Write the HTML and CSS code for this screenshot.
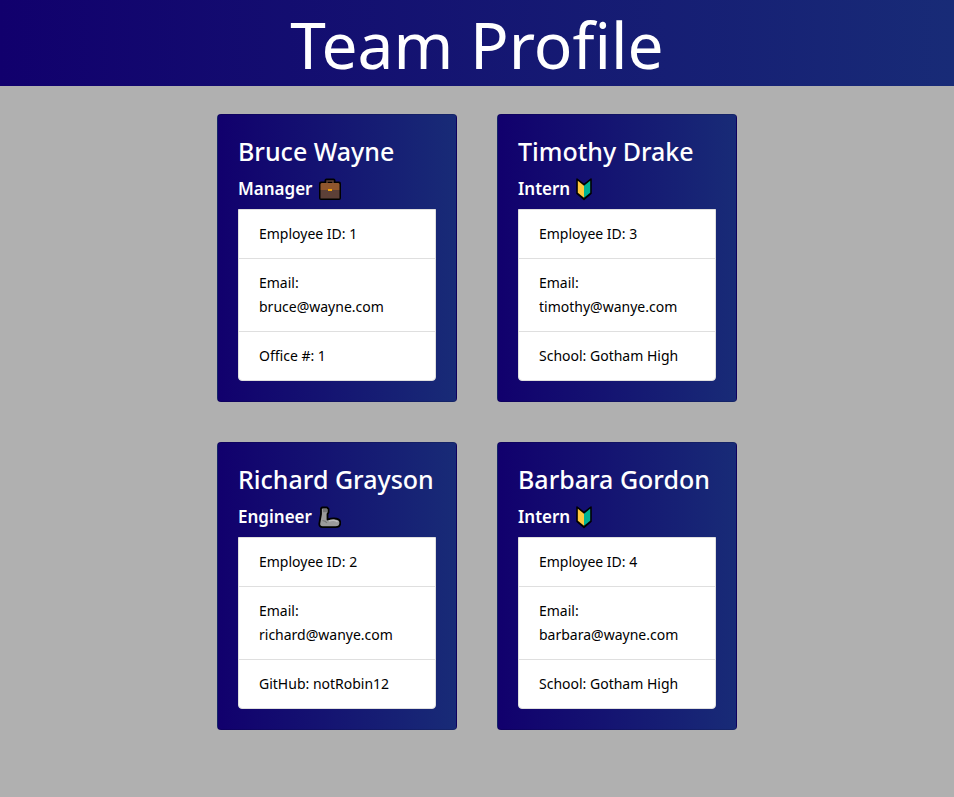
FILE: index.html
```html
<!DOCTYPE html>
<html lang="en">
<head>
  <meta charset="utf-8">
  <meta name="viewport" content="width=device-width, initial-scale=1">
  <title>Team Profile</title>
  <link rel="stylesheet" href="styles.css">
</head>
<body>
  <svg class="sprite" aria-hidden="true">
    <symbol id="briefcase" viewBox="0 0 24 24">
      <path d="M8.500 6V3.500h7V6" fill="none" stroke="#000" stroke-width="4" stroke-linejoin="round"/>
      <rect x="1" y="4.500" width="22" height="18.500" rx="2" fill="#000"/>
      <path d="M9 6V4h6v2" fill="none" stroke="#5d4037" stroke-width="1.500"/>
      <path d="M2.500 13h19v8.500h-19z" fill="#5d4037"/>
      <path d="M3.500 6h17l1 1v6h-19V7z" fill="#8e562e"/>
      <rect x="10" y="12" width="4" height="2" fill="#f0a30a"/>
    </symbol>
    <symbol id="beginner" viewBox="3 0 18 24">
      <path d="M5 2 12 7.500 19 2V16.500L12 22.500l-7-6z" fill="#000" stroke="#000" stroke-width="1.500" stroke-linejoin="round"/>
      <path d="M5.800 3.800l6.200 5v12L5.800 15.800z" fill="#ffc83d"/>
      <path d="M18.200 3.800l-6.200 5v12l6.200-5z" fill="#00b294"/>
    </symbol>
    <symbol id="arm" viewBox="0 0 24 24">
      <path d="M5 2.500h5l1.500 1.500v3.500L10.500 9v5.500c2-.7 4-1 6.500-1 4 0 6.300 1.600 6.300 4.200 0 2.800-2 4.500-4.800 4.500H5.500c-2.300 0-3.300-1.500-3.200-3.500L4 9V3.500z" fill="#9b9b9b" stroke="#000" stroke-width="1.800" stroke-linejoin="round"/>
      <path d="M6 3.800h4v3.400H6z" fill="#767676"/>
      <path d="M5.500 15.500c2 .2 3.500 1 4.500 2.500" fill="none" stroke="#767676" stroke-width="1.200"/>
      <path d="M12 16c3-1.200 7-1 8.500 1" fill="none" stroke="#bdbdbd" stroke-width="1.500"/>
    </symbol>
  </svg>

  <header class="banner">
    <h1 class="banner-title">Team Profile</h1>
  </header>

  <main class="team">
    <article class="card">
      <h2 class="name">Bruce Wayne</h2>
      <h3 class="role">Manager <svg class="icon" aria-hidden="true"><use href="#briefcase"/></svg></h3>
      <ul class="details">
        <li>Employee ID: 1</li>
        <li>Email: <a href="mailto:bruce@wayne.com">bruce@wayne.com</a></li>
        <li>Office #: 1</li>
      </ul>
    </article>
    <article class="card">
      <h2 class="name">Timothy Drake</h2>
      <h3 class="role">Intern <svg class="icon icon-narrow" aria-hidden="true"><use href="#beginner"/></svg></h3>
      <ul class="details">
        <li>Employee ID: 3</li>
        <li>Email: <a href="mailto:timothy@wanye.com">timothy@wanye.com</a></li>
        <li>School: Gotham High</li>
      </ul>
    </article>
    <article class="card">
      <h2 class="name">Richard Grayson</h2>
      <h3 class="role">Engineer <svg class="icon" aria-hidden="true"><use href="#arm"/></svg></h3>
      <ul class="details">
        <li>Employee ID: 2</li>
        <li>Email: <a href="mailto:richard@wanye.com">richard@wanye.com</a></li>
        <li>GitHub: notRobin12</li>
      </ul>
    </article>
    <article class="card">
      <h2 class="name">Barbara Gordon</h2>
      <h3 class="role">Intern <svg class="icon icon-narrow" aria-hidden="true"><use href="#beginner"/></svg></h3>
      <ul class="details">
        <li>Employee ID: 4</li>
        <li>Email: <a href="mailto:barbara@wayne.com">barbara@wayne.com</a></li>
        <li>School: Gotham High</li>
      </ul>
    </article>
  </main>
</body>
</html>
```
FILE: styles.css
```css
* {
  box-sizing: border-box;
}

body {
  margin: 0;
  background: #b0b0b0;
  color: #000;
  font-family: "Noto Sans", sans-serif;
  font-size: 14px;
  line-height: 24px;
}

h1,
h2,
h3,
ul {
  margin: 0;
  padding: 0;
}

.sprite {
  position: absolute;
  width: 0;
  height: 0;
}

.banner {
  padding: 4px 0 0;
  background: linear-gradient(to right, #11006d, #182b77);
  color: #fff;
  text-align: center;
}

.banner-title {
  font-size: 64px;
  font-weight: 400;
  line-height: 82px;
}

.team {
  display: grid;
  grid-template-columns: repeat(auto-fit, 240px);
  gap: 40px;
  justify-content: center;
  max-width: 720px;
  margin: 0 auto;
  padding: 28px 20px;
}

.card {
  padding: 20px;
  border: 1px solid rgba(0, 0, 0, 0.125);
  border-radius: 4px;
  background: linear-gradient(to right, #11006d, #182b77);
}

.name,
.role {
  margin-bottom: 8px;
  color: #fff;
  white-space: nowrap;
}

.name {
  font-size: 25px;
  font-weight: 500;
  line-height: 32px;
  padding-bottom: 2px;
}

.role {
  display: flex;
  align-items: center;
  gap: 5px;
  font-size: 17px;
  font-weight: 600;
  line-height: 24px;
}

.icon {
  width: 24px;
  height: 24px;
}

.icon-narrow {
  width: 18px;
}

.details {
  border: 1px solid #dfdfdf;
  border-radius: 0 0 4px 4px;
  background: #fff;
  list-style: none;
}

.details li {
  padding: 12px 20px;
}

.details li + li {
  border-top: 1px solid #dfdfdf;
}

.details a {
  display: block;
  color: inherit;
  text-decoration: none;
}
```
